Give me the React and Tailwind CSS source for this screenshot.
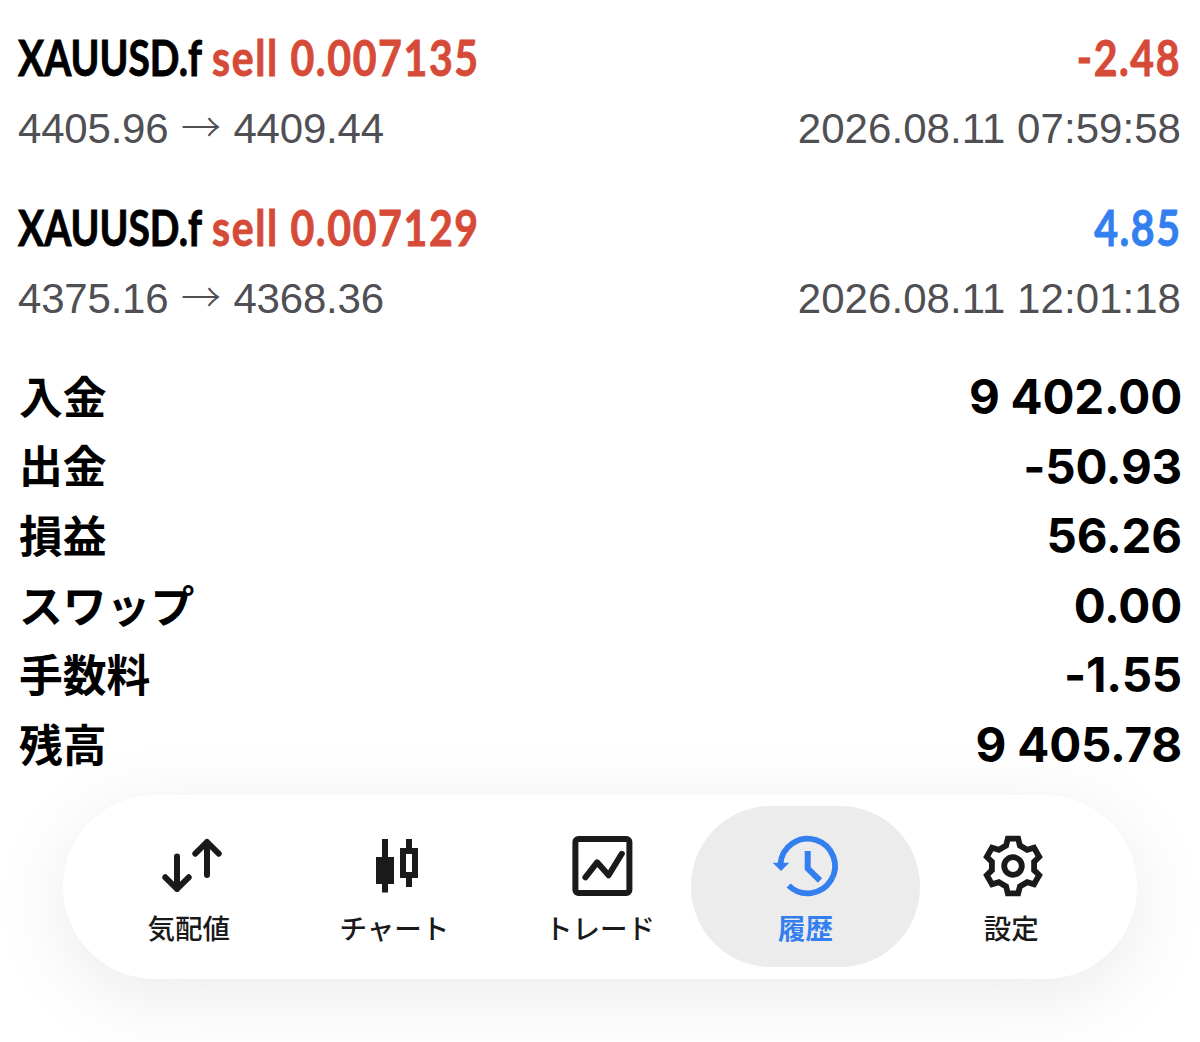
// Closed deals shown at the top of the history
const deals = [
  {
    id: 1,
    symbol: "XAUUSD.f",
    action: "sell 0.007135",
    open: "4405.96",
    close: "4409.44",
    profit: "-2.48",
    time: "2026.08.11 07:59:58",
  },
  {
    id: 2,
    symbol: "XAUUSD.f",
    action: "sell 0.007129",
    open: "4375.16",
    close: "4368.36",
    profit: "4.85",
    time: "2026.08.11 12:01:18",
  },
]

// Account totals
const totals = [
  { label: "入金", value: "9 402.00" },
  { label: "出金", value: "-50.93" },
  { label: "損益", value: "56.26" },
  { label: "スワップ", value: "0.00" },
  { label: "手数料", value: "-1.55" },
  { label: "残高", value: "9 405.78" },
]

// Shared wrapper for the tab bar icons
const Icon = ({ children }) => (
  <svg className="ml-1 h-16 w-16 shrink-0 overflow-visible" viewBox="0 0 64 64" fill="none" stroke="currentColor">
    {children}
  </svg>
)

const QuotesIcon = () => (
  <Icon>
    <g strokeWidth="6" strokeLinecap="round" strokeLinejoin="round">
      <path d="M18 22.5V55M6.3 43.3L18 55l11.7-11.7" />
      <path d="M48 41V8M36.3 19.7L48 8l11.7 11.7" />
    </g>
  </Icon>
)

const ChartIcon = () => (
  <Icon>
    <g fill="currentColor" stroke="none">
      <path d="M18 5h6v18h6v27h-6v8.5h-6V50h-6V23h6z" />
      <path fillRule="evenodd" d="M42 5h6v9h6v30h-6v9h-6v-9h-6V14h6zM42 20v18h6V20z" />
    </g>
  </Icon>
)

const TradeIcon = () => (
  <Icon>
    <rect x="5.4" y="5" width="54" height="54" rx="3" strokeWidth="6" />
    <path d="M15.4 43.3L27.1 28.3l11.5 13L51.8 19.8" strokeWidth="6" strokeLinecap="round" strokeLinejoin="round" />
  </Icon>
)

const HistoryIcon = () => (
  <Icon>
    <path d="M4.5 30A27.3 27.3 0 1 1 12.6 51.5" strokeWidth="5.8" />
    <path d="M31.7 17v17.5l12.3 12" strokeWidth="6" />
    <path d="M-3.3 28.8h16.6L5 37z" fill="currentColor" stroke="none" />
  </Icon>
)

const SettingsIcon = () => (
  <Icon>
    <g transform="translate(32 32)" strokeWidth="5.8">
      <path d="M-5.2-27.3L5.2-27.3L6.9-20.4L14.2-16.2L21-18.2L26.2-9.15L21.1-4.2L21.1 4.2L26.2 9.15L21 18.2L14.2 16.2L6.9 20.4L5.2 27.3L-5.2 27.3L-6.9 20.4L-14.2 16.2L-21 18.2L-26.2 9.15L-21.1 4.2L-21.1-4.2L-26.2-9.15L-21-18.2L-14.2-16.2L-6.9-20.4Z" />
      <circle r="8.8" />
    </g>
  </Icon>
)

const tabs = [
  { label: "気配値", icon: QuotesIcon },
  { label: "チャート", icon: ChartIcon },
  { label: "トレード", icon: TradeIcon },
  { label: "履歴", icon: HistoryIcon, active: true },
  { label: "設定", icon: SettingsIcon },
]

// One closed deal: symbol and profit, then prices and close time
const Deal = ({ deal }) => (
  <div className="flex h-[170px] flex-col">
    <div className="flex h-[60px] items-center justify-between pr-px font-['Lato'] text-[50px] leading-[60px] font-bold whitespace-nowrap [-webkit-text-stroke:0.9px_currentColor]">
      <div className="flex w-[470px]">
        <span className="w-[194px] origin-left scale-x-[0.78] text-black">{deal.symbol}</span>
        <span className="origin-left scale-x-[0.82] tracking-[2px] text-[#d64a38]">{deal.action}</span>
      </div>
      <span
        className={`origin-right scale-x-[0.82] tracking-[1.9px] ${
          deal.profit.startsWith("-") ? "text-[#d64a38]" : "text-[#337ff0]"
        }`}
      >
        {deal.profit}
      </span>
    </div>
    <div className="mt-3 flex h-[60px] items-center justify-between pr-px font-['Liberation_Sans'] text-[42px] leading-[60px] whitespace-nowrap text-[#4f4f54]">
      <div className="flex">
        <span className="tracking-[-0.2px]">{deal.open}</span>
        <span className="w-[65px] text-center font-['Noto_Sans_CJK_JP'] text-[40px] leading-[52px] font-light">→</span>
        <span className="tracking-[-0.2px]">{deal.close}</span>
      </div>
      <span className="tracking-[0.05px]">{deal.time}</span>
    </div>
  </div>
)

export default function App() {
  return (
    <div className="flex h-[1042px] w-[1200px] flex-col overflow-hidden bg-white pt-[27px]">
      <div className="pr-[18px] pl-[18px]">
        {deals.map((deal) => (
          <Deal key={deal.id} deal={deal} />
        ))}
      </div>

      {/* Totals */}
      <div className="-mt-[5px] pr-[18px] pl-[19px] text-black">
        {totals.map((t) => (
          <div key={t.label} className="flex h-[69.6px] items-center justify-between">
            <span className="pb-[2px] font-['Noto_Sans_CJK_JP'] text-[43.8px] leading-none font-bold">{t.label}</span>
            <span className="font-['Inter'] text-[47.5px] leading-none font-bold tracking-[-0.2px] [font-feature-settings:'calt'_0]">
              {t.value}
            </span>
          </div>
        ))}
      </div>

      {/* Tab bar */}
      <nav className="mx-[63px] mt-[15px] flex h-[184px] shrink-0 items-center rounded-full bg-white pr-[23px] pl-[23px] shadow-[0_16px_80px_rgba(0,0,0,0.085)]">
        {tabs.map(({ label, icon: TabIcon, active }) => (
          <div
            key={label}
            className={`flex h-[161px] flex-1 flex-col items-center pt-[28px] ${
              active ? "-mx-3 basis-6 rounded-[80px] bg-[#ececec] text-[#337ff0]" : "text-[#1a1a1a]"
            }`}
          >
            <TabIcon />
            <span className={`mt-[15px] font-['Noto_Sans_CJK_JP'] text-[27.5px] leading-[28px] whitespace-nowrap ${active ? "font-bold" : "font-medium"}`}>
              {label}
            </span>
          </div>
        ))}
      </nav>
    </div>
  )
}
